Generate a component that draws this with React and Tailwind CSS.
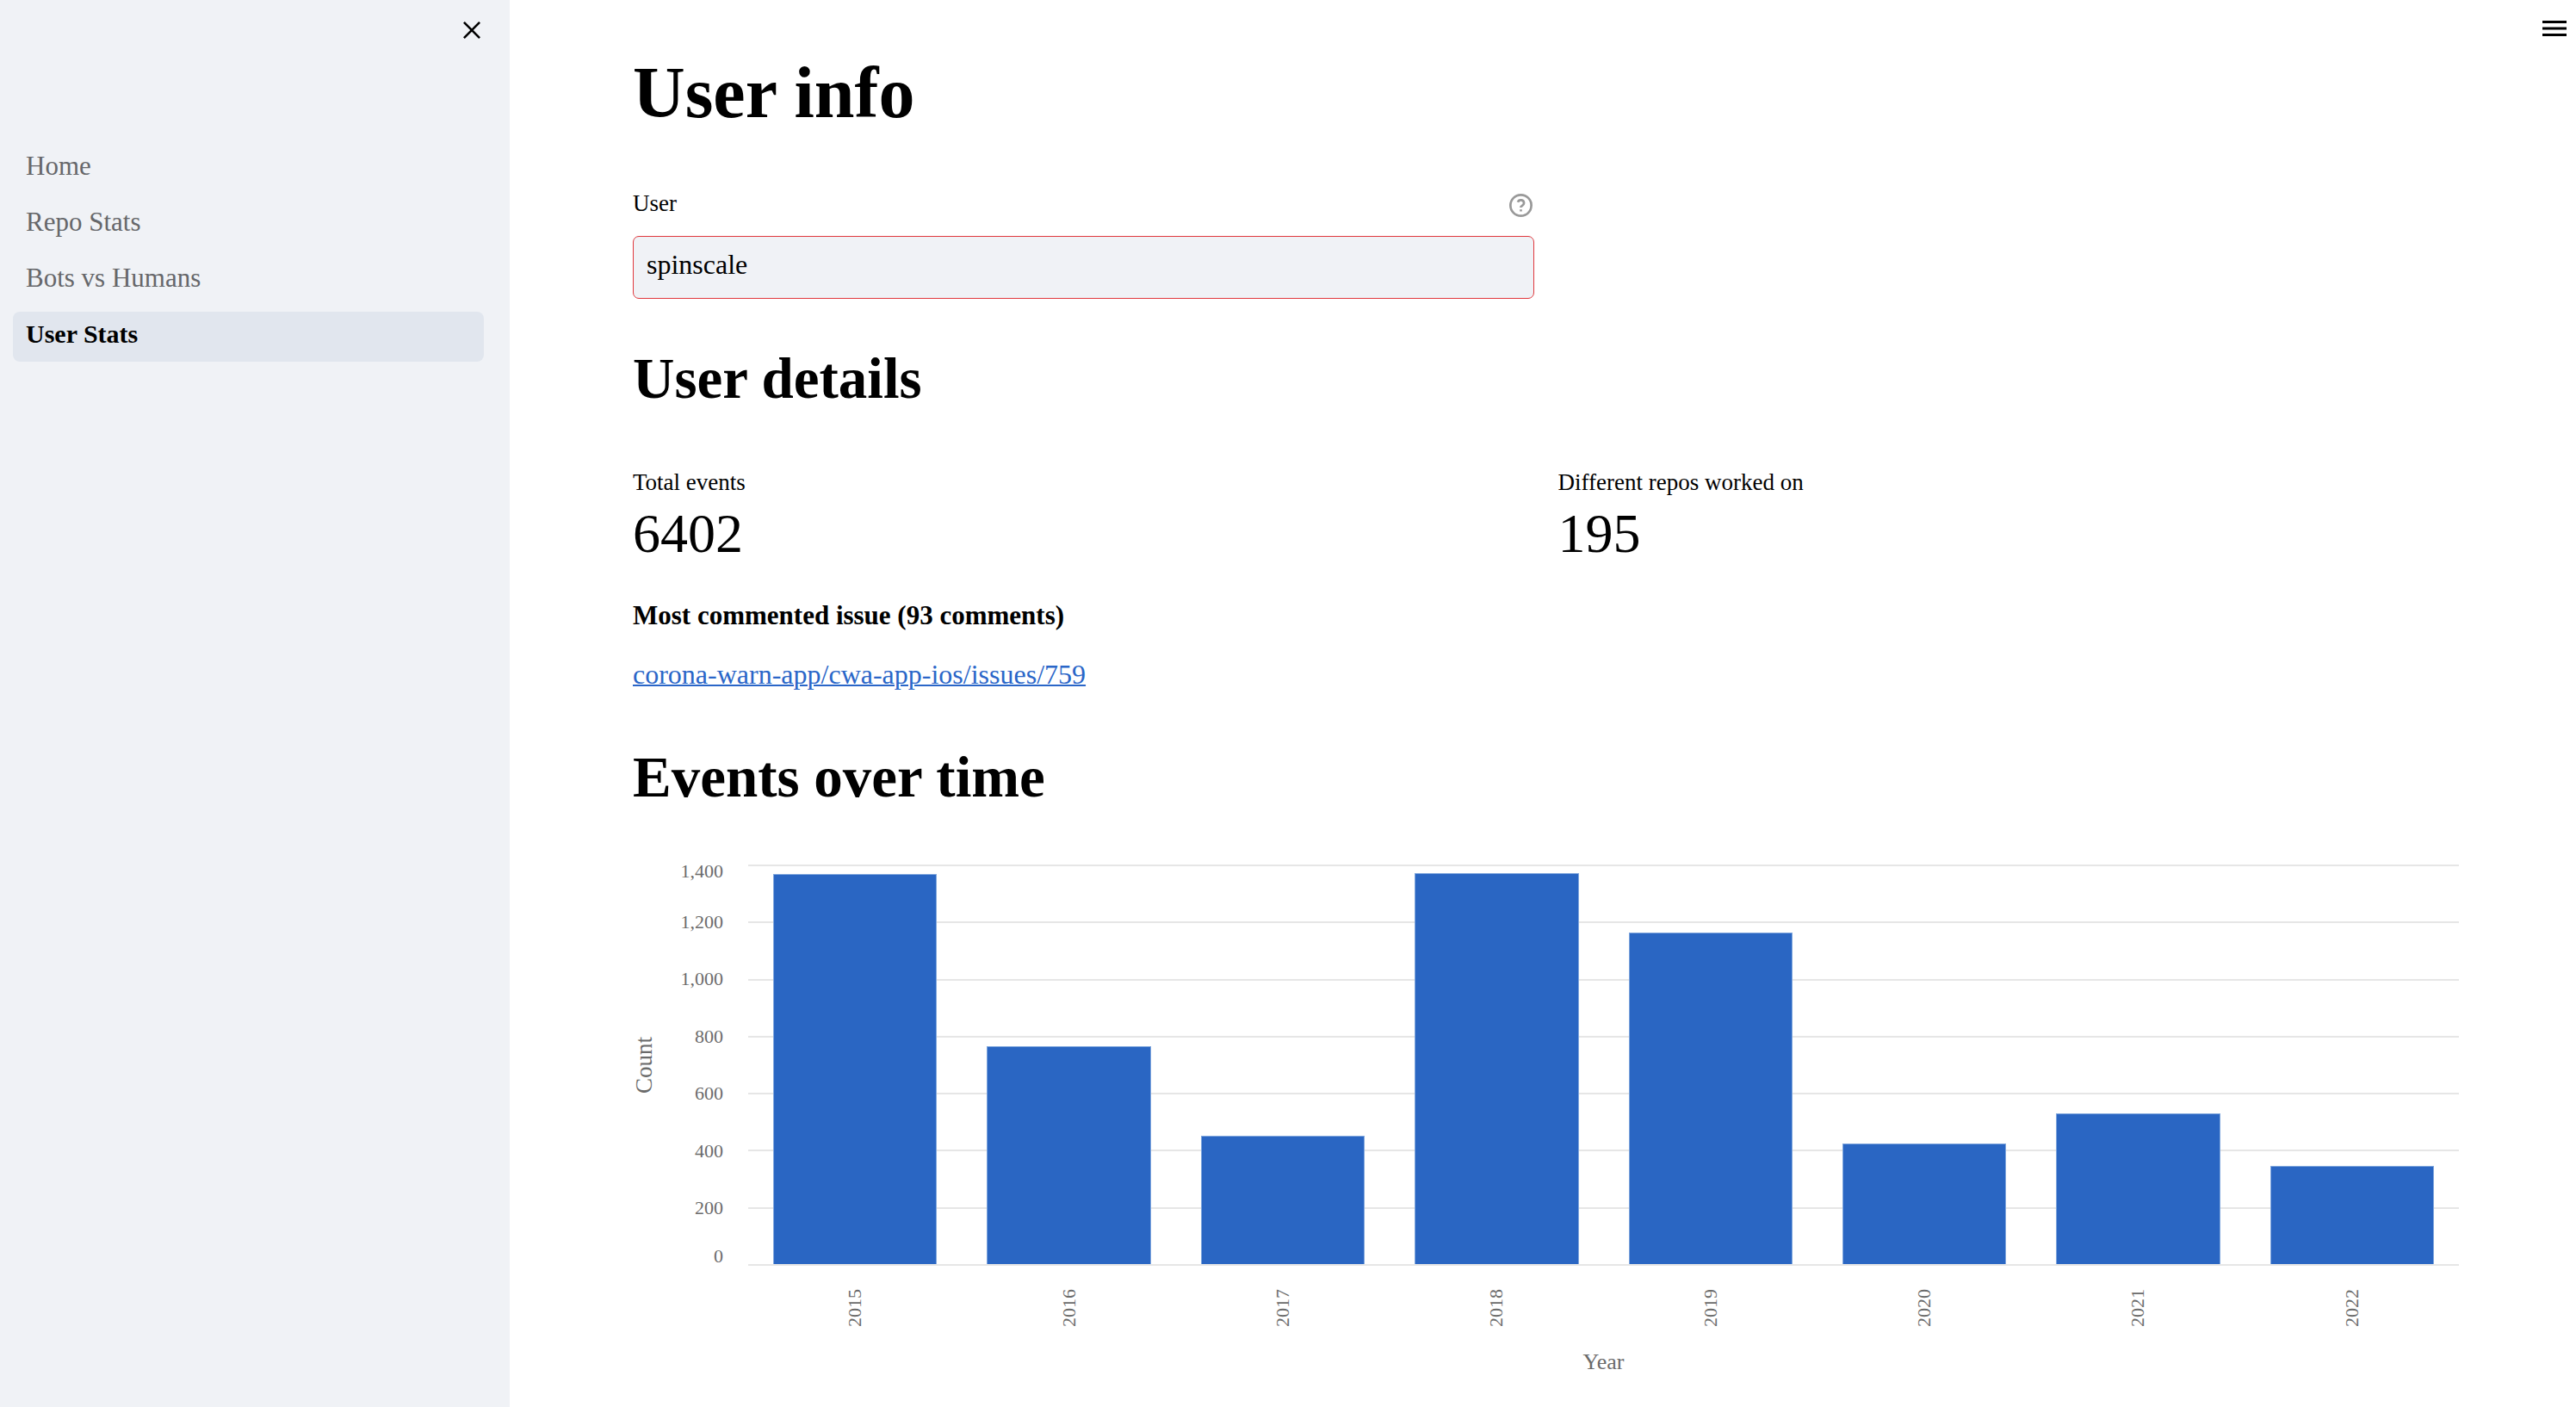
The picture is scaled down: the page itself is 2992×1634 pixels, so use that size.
const NAV = [
  { label: "Home" },
  { label: "Repo Stats" },
  { label: "Bots vs Humans" },
  { label: "User Stats", active: true },
];

const MAX = 1400;
const TICKS = ["1,400", "1,200", "1,000", "800", "600", "400", "200"];
const DATA = [
  { year: 2015, count: 1367 },
  { year: 2016, count: 762 },
  { year: 2017, count: 449 },
  { year: 2018, count: 1370 },
  { year: 2019, count: 1163 },
  { year: 2020, count: 421 },
  { year: 2021, count: 528 },
  { year: 2022, count: 345 },
];

function CloseIcon() {
  return (
    <svg viewBox="0 0 20 20" className="size-5" fill="none" stroke="currentColor" strokeWidth="2.6" aria-hidden="true">
      <path d="M0.9 0.9 19.1 19.1M19.1 0.9 0.9 19.1" />
    </svg>
  );
}

function MenuIcon() {
  return (
    <svg viewBox="0 0 28 18" className="h-[18px] w-7" fill="currentColor" aria-hidden="true">
      <path d="M0 0h28v3H0zM0 7.5h28v3H0zM0 15h28v3H0z" />
    </svg>
  );
}

function HelpIcon() {
  return (
    <svg
      viewBox="1 1 22 22"
      className="size-[27px]"
      fill="none"
      stroke="currentColor"
      strokeWidth="2.2"
      strokeLinejoin="round"
      aria-hidden="true"
    >
      <circle cx="12" cy="12" r="9.9" />
      <path d="M9.09 9a3 3 0 0 1 5.83 1c0 2-3 2.6-3 3.6v.4M12 15.8v2" />
    </svg>
  );
}

function Sidebar() {
  return (
    <aside className="flex w-[592px] shrink-0 flex-col bg-[#f0f2f6]">
      <div className="flex justify-end pt-[25px] pr-[34px]">
        <button type="button" aria-label="Close sidebar">
          <CloseIcon />
        </button>
      </div>
      <nav className="mt-[122px] flex flex-col gap-[7px] pr-[30px] pl-[15px]">
        {NAV.map(({ label, active }) => (
          <a
            key={label}
            href="#"
            aria-current={active ? "page" : undefined}
            className={
              active
                ? "rounded-lg bg-[#e1e6ee] px-[15px] pb-[6px] text-[30px] leading-[52px] font-bold"
                : "rounded-lg px-[15px] pb-[6px] text-[31px] leading-[52px] text-[#66676a]"
            }
          >
            {label}
          </a>
        ))}
      </nav>
    </aside>
  );
}

function Metric({ label, value }) {
  return (
    <div>
      <dt className="text-[27px] leading-9">{label}</dt>
      <dd className="mt-1 text-[64px] leading-[76px]">{value}</dd>
    </div>
  );
}

function EventsChart() {
  return (
    <figure
      aria-label="Events per year"
      className="mt-[62px] grid grid-cols-[26px_79px_1fr] text-[22px] text-[#6b6b6b]"
    >
      <div className="flex items-center justify-center">
        <span className="rotate-180 text-[27px] leading-[26px] [writing-mode:vertical-rl]">Count</span>
      </div>

      <div className="flex h-[466px] flex-col text-right">
        {TICKS.map((tick, i) => (
          <div key={tick} className="flex flex-1 flex-col justify-between">
            <span className={i === 0 ? "leading-[16px]" : "h-0 leading-[0px]"}>{tick}</span>
            {i === TICKS.length - 1 && <span className="leading-[22px]">0</span>}
          </div>
        ))}
      </div>

      <div className="ml-[29px] grid border-b-2 border-[#e6e6e6]">
        <div className="col-start-1 row-start-1 flex flex-col">
          {TICKS.map((tick) => (
            <div key={tick} className="flex-1 border-t-2 border-[#e6e6e6]" />
          ))}
        </div>
        <div className="z-10 col-start-1 row-start-1 grid grid-cols-8 items-end">
          {DATA.map(({ year, count }) => (
            <div
              key={year}
              className="mx-[29px] border border-b-0 border-[#7fa6dd] bg-[#2a66c3]"
              style={{ height: `${(count / MAX) * 100}%` }}
            />
          ))}
        </div>
      </div>

      <div className="col-start-3 mt-[27px] ml-[29px] grid grid-cols-8 justify-items-center">
        {DATA.map(({ year }) => (
          <span key={year} className="rotate-180 leading-[22px] [writing-mode:vertical-rl]">
            {year}
          </span>
        ))}
      </div>
      <figcaption className="col-start-3 mt-[25px] ml-[29px] text-center text-[26px] leading-8">Year</figcaption>
    </figure>
  );
}

export default function App() {
  return (
    <div className="flex min-h-screen bg-white font-['Source_Serif_Pro','Liberation_Serif',serif] text-black">
      <Sidebar />
      <main className="relative min-w-0 flex-1 pt-[58px] pr-[136px] pl-[143px]">
        <button type="button" aria-label="Main menu" className="absolute top-6 right-[11px]">
          <MenuIcon />
        </button>

        <h1 className="text-[84px] leading-[100px] font-bold">User info</h1>

        <div className="mt-[60px] grid grid-cols-2 gap-7">
          <div>
            <div className="flex items-center justify-between">
              <label htmlFor="user" className="pb-1 text-[27px] leading-9">
                User
              </label>
              <button type="button" aria-label="Help" className="mr-0.5 text-[#999999]">
                <HelpIcon />
              </button>
            </div>
            <input
              id="user"
              type="text"
              defaultValue="spinscale"
              className="mt-4 block h-[73px] w-full rounded-[7px] border border-[#e0393e] bg-[#f0f2f6] px-[15px] pb-[6px] text-[32px] outline-none"
            />
          </div>
        </div>

        <h2 className="mt-[52px] text-[67px] leading-[80px] font-bold">User details</h2>

        <dl className="mt-[63px] grid grid-cols-2 gap-7">
          <Metric label="Total events" value="6402" />
          <Metric label="Different repos worked on" value="195" />
        </dl>

        <p className="mt-[33px] text-[31px] leading-[48px] font-bold">Most commented issue (93 comments)</p>
        <p className="mt-5 text-[32px] leading-[48px]">
          <a href="#" className="text-[#2a66c8] underline decoration-2">
            corona-warn-app/cwa-app-ios/issues/759
          </a>
        </p>

        <h2 className="mt-[55px] text-[67px] leading-[80px] font-bold">Events over time</h2>
        <EventsChart />
      </main>
    </div>
  );
}
